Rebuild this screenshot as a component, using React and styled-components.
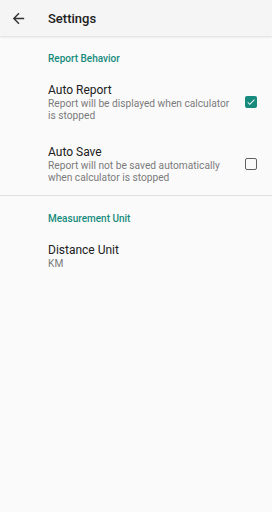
import React, { useState } from "react";
import styled, { createGlobalStyle } from "styled-components";

const GlobalStyle = createGlobalStyle`
  html, body {
    margin: 0;
    padding: 0;
    background: #fafafa;
    font-family: Roboto, "Noto Sans", sans-serif;
  }
`;

export default function App() {
  const [autoReport, setAutoReport] = useState(true);
  const [autoSave, setAutoSave] = useState(false);

  return (
    <Page>
      <GlobalStyle />
      <Toolbar>
        <BackButton aria-label="Back">
          <svg width="17" height="17" viewBox="0 0 24 24" fill="#333">
            <path d="M20 11H7.83l5.59-5.59L12 4l-8 8 8 8 1.41-1.41L7.83 13H20v-2z" />
          </svg>
        </BackButton>
        <Title>Settings</Title>
      </Toolbar>

      <Category>Report Behavior</Category>
      <Row onClick={() => setAutoReport(!autoReport)}>
        <TextCol>
          <RowTitle>Auto Report</RowTitle>
          <RowSummary>Report will be displayed when calculator is stopped</RowSummary>
        </TextCol>
        <Widget>
          <Check checked={autoReport}>
            {autoReport && (
              <svg width="10" height="10" viewBox="0 0 24 24" fill="#fff">
                <path d="M9 16.17L4.83 12l-1.42 1.41L9 19 21 7l-1.41-1.41z" />
              </svg>
            )}
          </Check>
        </Widget>
      </Row>
      <Row onClick={() => setAutoSave(!autoSave)}>
        <TextCol>
          <RowTitle>Auto Save</RowTitle>
          <RowSummary>Report will not be saved automatically when calculator is stopped</RowSummary>
        </TextCol>
        <Widget>
          <Check checked={autoSave}>
            {autoSave && (
              <svg width="10" height="10" viewBox="0 0 24 24" fill="#fff">
                <path d="M9 16.17L4.83 12l-1.42 1.41L9 19 21 7l-1.41-1.41z" />
              </svg>
            )}
          </Check>
        </Widget>
      </Row>

      <Divider />

      <Category>Measurement Unit</Category>
      <Row>
        <TextCol>
          <RowTitle>Distance Unit</RowTitle>
          <RowSummary>KM</RowSummary>
        </TextCol>
      </Row>
    </Page>
  );
}

const Page = styled.div`
  width: 272px;
  min-height: 512px;
  background: #fafafa;
`;

const Toolbar = styled.div`
  display: flex;
  align-items: center;
  height: 36px;
  background: #f5f5f5;
  box-shadow: 0 1px 2px rgba(0, 0, 0, 0.12);
`;

const BackButton = styled.button`
  display: flex;
  align-items: center;
  justify-content: center;
  width: 36px;
  height: 36px;
  padding: 0;
  border: none;
  background: none;
  cursor: pointer;
`;

const Title = styled.div`
  margin-left: 12px;
  font-size: 13px;
  font-weight: 500;
  color: #212121;
`;

const Category = styled.div`
  padding: 16px 0 5px 48px;
  font-size: 10px;
  line-height: 14px;
  font-weight: 500;
  color: #168a7c;
`;

const Row = styled.div`
  display: flex;
  align-items: center;
  padding: 11px 0;
  cursor: pointer;
`;

const TextCol = styled.div`
  flex: 1;
  padding-left: 48px;
`;

const RowTitle = styled.div`
  font-size: 12px;
  line-height: 16px;
  color: #212121;
`;

const RowSummary = styled.div`
  font-size: 10.2px;
  line-height: 12px;
  color: #7a7a7a;
`;

const Widget = styled.div`
  display: flex;
  justify-content: flex-end;
  width: 40px;
  padding-right: 15px;
  box-sizing: border-box;
`;

const Check = styled.div`
  display: flex;
  align-items: center;
  justify-content: center;
  width: 12px;
  height: 12px;
  box-sizing: border-box;
  border-radius: 2px;
  border: ${(p) => (p.checked ? "none" : "1.5px solid #616161")};
  background: ${(p) => (p.checked ? "#168a7c" : "transparent")};
`;

const Divider = styled.div`
  height: 1px;
  background: #e0e0e0;
`;
